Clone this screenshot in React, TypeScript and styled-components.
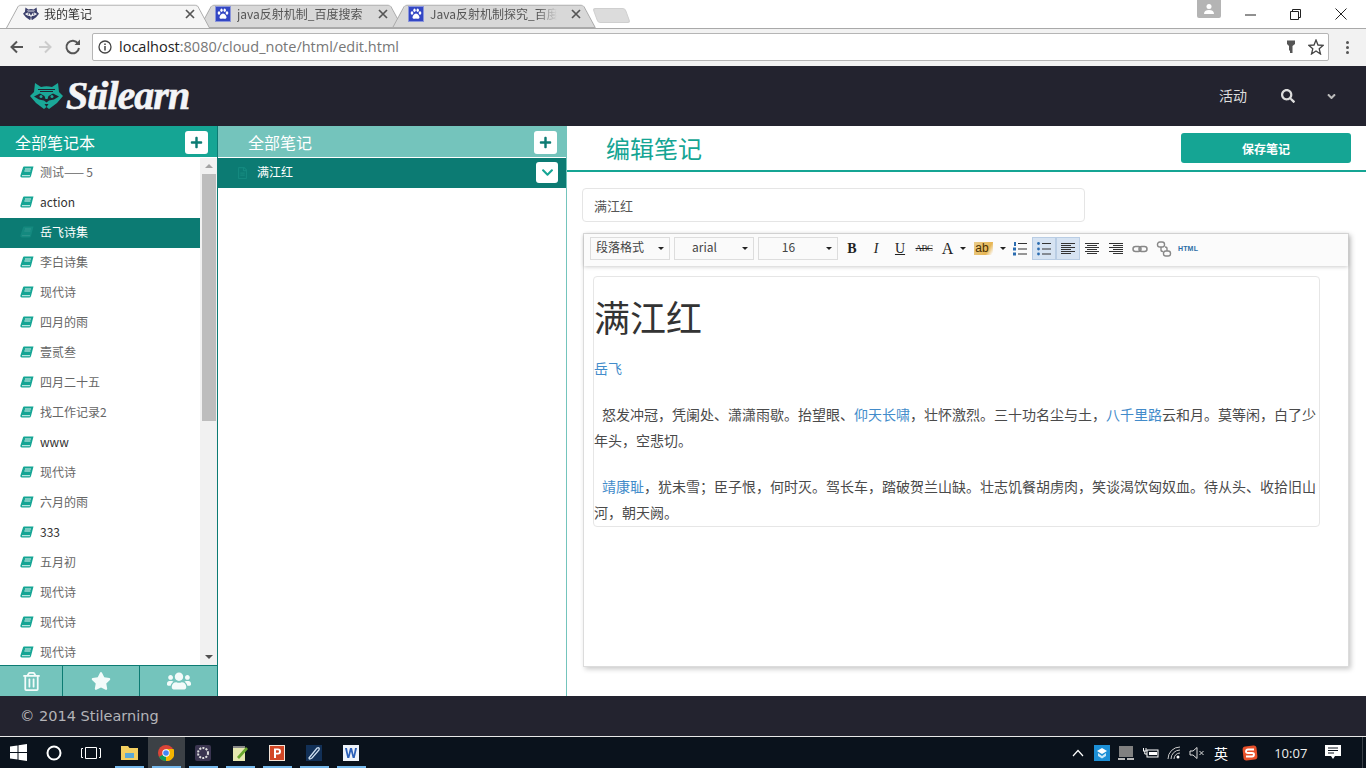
import React from "react";
import styled, { createGlobalStyle } from "styled-components";
import {
  FaPlus,
  FaChevronDown,
  FaSearch,
  FaRegTrashAlt,
  FaStar,
  FaUsers,
  FaRegFileAlt,
  FaAngleDown,
} from "react-icons/fa";

const CJK = `"Noto Sans CJK SC", "Open Sans", sans-serif`;
const TEAL = "#15a594";
const DARK_TEAL = "#0c7b73";
const PALE_TEAL = "#74c4bc";
const NAVY = "#23232f";

const Global = createGlobalStyle`
  html, body { margin: 0; padding: 0; height: 100%; overflow: hidden; background: #fff; }
  * { box-sizing: border-box; }
  #root { height: 100%; }
`;

const Page = styled.div`
  width: 1366px;
  height: 768px;
  display: flex;
  flex-direction: column;
  overflow: hidden;
  font-family: ${CJK};
  background: #fff;
`;

/* ---------- browser chrome ---------- */
const TabStrip = styled.div`
  height: 28px;
  display: flex;
  align-items: flex-end;
  padding-left: 8px;
  background: #fff;
  position: relative;
`;
const Tab = styled.div<{ $active?: boolean }>`
  position: relative;
  width: 193px;
  height: 28px;
  display: flex;
  align-items: center;
  padding: 0 6px 0 ${(p) => (p.$active ? 15 : 14)}px;
  gap: ${(p) => (p.$active ? 5 : 6)}px;
  font-size: 12px;
  color: ${(p) => (p.$active ? "#333" : "#555")};
  z-index: ${(p) => (p.$active ? 2 : 1)};
  &::before {
    content: "";
    position: absolute;
    inset: 1px -9px 0 -2px;
    z-index: -1;
    background: ${(p) => (p.$active ? "#f5f5f5" : "#d8d8d8")};
    border: 1px solid #a9a9a9;
    border-bottom: ${(p) => (p.$active ? "none" : "1px solid #a9a9a9")};
    border-radius: 3px 3px 0 0;
    transform: perspective(40px) rotateX(12deg);
    transform-origin: bottom;
  }
`;
const TabTitle = styled.span<{ $fade?: boolean }>`
  flex: 1;
  min-width: 0;
  margin-right: 8px;
  white-space: nowrap;
  overflow: hidden;
  margin-top: -2px;
  ${(p) =>
    p.$fade
      ? "mask-image: linear-gradient(to right, #000 85%, transparent 100%);"
      : ""}
`;
const TabClose = styled.svg`
  width: 10px;
  height: 10px;
  flex: none;
`;
const NewTab = styled.div`
  width: 33px;
  height: 15px;
  margin: 0 0 5px 8px;
  background: #dcdcdc;
  border: 1px solid #cfcfcf;
  border-radius: 3px;
  transform: skewX(20deg);
`;
const WindowControls = styled.div`
  margin-left: auto;
  height: 28px;
  display: flex;
  align-items: flex-start;
  padding-right: 2px;
`;
const UserBadge = styled.div`
  width: 24px;
  height: 18px;
  background: #b4b4b4;
  border-radius: 0 0 2px 2px;
  margin-right: 7px;
  display: flex;
  align-items: center;
  justify-content: center;
`;
const WinButton = styled.div`
  width: 45.5px;
  height: 28px;
  display: flex;
  align-items: center;
  justify-content: center;
`;
const BrowserBar = styled.div`
  height: 38px;
  background: #f2f2f2;
  display: flex;
  align-items: center;
  border-top: 1px solid #a9a9a9;
  padding: 0 0 1px 8px;
  position: relative;
  z-index: 1;
`;
const NavIcon = styled.svg`
  width: 18px;
  height: 18px;
  flex: none;
  & + & {
    margin-left: 10px;
  }
`;
const UrlBox = styled.div`
  margin-left: 10px;
  width: 1237px;
  height: 28px;
  background: #fff;
  border: 1px solid #b5b5b5;
  border-radius: 2px;
  display: flex;
  align-items: center;
  padding-left: 5px;
  padding-right: 4px;
  font-family: "Open Sans", sans-serif;
  font-size: 14.5px;
`;
const UrlText = styled.span`
  color: #777;
  margin: -1px 0 0 7px;
  flex: 1;
  white-space: nowrap;
`;
const UrlHost = styled.span`
  color: #222;
`;
const UrlIcon = styled.svg`
  width: 16px;
  height: 16px;
  flex: none;
  margin-left: 9px;
`;
const MenuDots = styled.div`
  margin-left: 17px;
  display: flex;
  flex-direction: column;
  gap: 2px;
  i {
    width: 3px;
    height: 3px;
    border-radius: 50%;
    background: #555;
    display: block;
  }
`;

/* ---------- app header ---------- */
const Header = styled.header`
  height: 60px;
  background: ${NAVY};
  display: flex;
  align-items: center;
  padding: 0 28px 0 30px;
  flex: none;
`;
const Logo = styled.div`
  display: flex;
  align-items: center;
  gap: 3px;
`;
const LogoText = styled.span`
  font-family: "Liberation Serif", serif;
  font-style: italic;
  font-weight: 700;
  font-size: 40px;
  line-height: 1;
  letter-spacing: -1px;
  color: #f4f5f7;
  -webkit-text-stroke: 0.6px #f4f5f7;
`;
const HeaderNav = styled.nav`
  margin-left: auto;
  display: flex;
  align-items: center;
  color: #ddd;
  font-size: 14px;
`;
const NavLabel = styled.span`
  margin: -2px 34px 0 0;
`;
const NavSearch = styled(FaSearch)`
  width: 14px;
  height: 14px;
  margin-right: 30px;
`;
const NavCaret = styled(FaAngleDown)`
  width: 13px;
  height: 13px;
  color: #bbb;
`;

/* ---------- main layout ---------- */
const Main = styled.main`
  flex: 1;
  display: flex;
  min-height: 0;
`;
const NotebookColumn = styled.section`
  width: 218px;
  flex: none;
  display: flex;
  flex-direction: column;
  border-right: 1px solid ${DARK_TEAL};
`;
const NotesColumn = styled.section`
  width: 349px;
  flex: none;
  display: flex;
  flex-direction: column;
  border-right: 1px solid ${PALE_TEAL};
`;
const ColumnHead = styled.div<{ $pale?: boolean }>`
  height: 31px;
  flex: none;
  background: ${(p) => (p.$pale ? PALE_TEAL : TEAL)};
  color: #fff;
  font-size: 16px;
  display: flex;
  align-items: center;
  justify-content: space-between;
  padding: 1px 9px 0 ${(p) => (p.$pale ? 30 : 15)}px;
`;
const SquareButton = styled.div`
  width: 23px;
  height: 23px;
  background: #fff;
  border-radius: 3px;
  color: ${DARK_TEAL};
  display: flex;
  align-items: center;
  justify-content: center;
  svg {
    width: 13px;
    height: 13px;
  }
`;
const ListArea = styled.div`
  flex: 1;
  min-height: 0;
  margin-top: 1px;
  display: flex;
  overflow: hidden;
`;
const List = styled.ul`
  flex: 1;
  margin: 0;
  padding: 0;
  list-style: none;
  overflow: hidden;
`;
const Row = styled.li<{ $active?: boolean; $latin?: boolean }>`
  height: 30px;
  display: flex;
  align-items: center;
  padding: 0 0 2px 20px;
  gap: 6px;
  font-size: 12px;
  color: ${(p) => (p.$active ? "#fff" : p.$latin ? "#333" : "#666")};
  background: ${(p) => (p.$active ? DARK_TEAL : "transparent")};
`;
const RowLabel = styled.span`
  margin-bottom: 2px;
`;
const Dash = styled.span`
  letter-spacing: 2px;
`;
const BookIcon = styled.svg<{ $active?: boolean }>`
  width: 14px;
  height: 12px;
  flex: none;
  color: ${(p) => (p.$active ? "#14897f" : TEAL)};
`;
const ScrollTrack = styled.div`
  width: 17px;
  flex: none;
  background: #f1f1f1;
  display: flex;
  flex-direction: column;
  align-items: center;
`;
const ScrollArrow = styled.div<{ $down?: boolean }>`
  flex: none;
  height: 16px;
  width: 17px;
  display: flex;
  align-items: center;
  justify-content: center;
  &::after {
    content: "";
    border-left: 4px solid transparent;
    border-right: 4px solid transparent;
    ${(p) =>
      p.$down
        ? "border-top: 4px solid #505050;"
        : "border-bottom: 4px solid #a3a3a3;"}
  }
`;
const ScrollThumb = styled.div`
  width: 14px;
  height: 247px;
  background: #bdbdbd;
  margin-bottom: auto;
`;
const BottomTabs = styled.div`
  height: 31px;
  flex: none;
  display: grid;
  grid-template-columns: 62px 77px 1fr;
  background: ${PALE_TEAL};
  border-top: 1px solid ${DARK_TEAL};
  color: #f3fbfa;
`;
const BottomTab = styled.div<{ $size: number }>`
  display: flex;
  align-items: center;
  justify-content: center;
  & + & {
    border-left: 1px solid ${DARK_TEAL};
  }
  svg {
    width: ${(p) => p.$size}px;
    height: ${(p) => p.$size}px;
  }
`;
const NoteRow = styled.div`
  height: 30px;
  margin-top: 1px;
  flex: none;
  display: flex;
  align-items: center;
  background: ${DARK_TEAL};
  color: #fff;
  font-size: 12px;
  padding: 0 8px 0 19px;
  gap: 9px;
`;
const NoteIcon = styled(FaRegFileAlt)`
  width: 11px;
  height: 12px;
  color: #14897f;
  margin-bottom: 1px;
`;
const NoteTitle = styled.span`
  flex: 1;
  margin-bottom: 3px;
`;
const NoteToggle = styled(SquareButton)`
  width: 22px;
  height: 21px;
  margin-bottom: 1px;
  color: ${TEAL};
`;

/* ---------- editor column ---------- */
const EditorColumn = styled.section`
  flex: 1;
  min-width: 0;
  display: flex;
  flex-direction: column;
  padding-bottom: 29px;
`;
const EditorHead = styled.div`
  height: 46px;
  flex: none;
  display: flex;
  align-items: center;
  justify-content: space-between;
  padding: 0 15px 0 39px;
  border-bottom: 2px solid ${TEAL};
  margin-bottom: 16px;
`;
const EditorTitle = styled.h2`
  margin: 0;
  font-size: 24px;
  font-weight: 400;
  color: ${TEAL};
  line-height: 1;
`;
const SaveButton = styled.button`
  width: 170px;
  height: 30px;
  border: 0;
  border-radius: 3px;
  background: ${TEAL};
  color: #fff;
  font: 700 12px ${CJK};
`;
const TitleInput = styled.div`
  width: 503px;
  height: 34px;
  margin-left: 15px;
  flex: none;
  border: 1px solid #e5e5e5;
  border-radius: 4px;
  display: flex;
  align-items: center;
  padding-left: 11px;
  font-size: 13px;
  color: #555;
`;
const EditorBox = styled.div`
  flex: 1;
  min-height: 0;
  margin: 11px 17px 0 16px;
  border: 1px solid #dcdcdc;
  box-shadow: 2px 2px 5px rgba(0, 0, 0, 0.22);
  background: #fff;
  display: flex;
  flex-direction: column;
`;
const Toolbar = styled.div`
  height: 32px;
  flex: none;
  background: #fbfbfb;
  box-shadow: 0 1px 4px rgba(0, 0, 0, 0.2);
  display: flex;
  align-items: center;
  padding: 0 0 3px 6px;
  font-family: "Liberation Serif", serif;
`;
const SelectBox = styled.div<{ $center?: boolean; $tight?: boolean }>`
  width: 80px;
  height: 23px;
  margin-right: ${(p) => (p.$tight ? 2 : 4)}px;
  border: 1px solid #ddd;
  background: #fafafa;
  font: 12px ${CJK};
  color: #444;
  display: flex;
  align-items: center;
  justify-content: ${(p) => (p.$center ? "center" : "flex-start")};
  padding: 0 ${(p) => (p.$center ? "24px" : "0")} 4px 5px;
  position: relative;
  &::after {
    content: "";
    position: absolute;
    right: 5px;
    top: 9px;
    border-left: 3px solid transparent;
    border-right: 3px solid transparent;
    border-top: 3px solid #222;
  }
`;
const ToolButton = styled.div<{ $wide?: boolean; $on?: boolean }>`
  width: ${(p) => (p.$wide ? 36 : 24)}px;
  height: 23px;
  flex: none;
  display: flex;
  align-items: center;
  justify-content: center;
  gap: 7px;
  color: #222;
  ${(p) =>
    p.$on
      ? `background: #d6e3f2; box-shadow: inset 0 0 0 1px #b9cde4, inset 0 0 0 2px #d6e3f2; background-clip: content-box; padding: 0 1px;`
      : ""}
`;
const Glyph = styled.span<{
  $size?: number;
  $weight?: number;
  $italic?: boolean;
  $under?: boolean;
  $strike?: boolean;
}>`
  font-size: ${(p) => p.$size ?? 15}px;
  font-weight: ${(p) => p.$weight ?? 400};
  font-style: ${(p) => (p.$italic ? "italic" : "normal")};
  text-decoration: ${(p) =>
    p.$under ? "underline" : p.$strike ? "line-through" : "none"};
  letter-spacing: ${(p) => (p.$strike ? "-0.5px" : "0")};
  line-height: 1;
`;
const Highlight = styled.span`
  font: 12px "Liberation Sans", sans-serif;
  line-height: 1;
  background: linear-gradient(120deg, #e9cd8c, #e7b654 70%, transparent 95%);
  padding: 0 4px 1px 1px;
  color: #4a3000;
`;
const HtmlLabel = styled.span`
  font: 700 7px "Liberation Sans", sans-serif;
  color: #2c6ea6;
  letter-spacing: 0.2px;
`;
const Caret = styled.i`
  width: 0;
  height: 0;
  border-left: 3px solid transparent;
  border-right: 3px solid transparent;
  border-top: 3px solid #222;
`;
const ToolSvg = styled.svg`
  width: 16px;
  height: 16px;
  display: block;
`;
const EditorBody = styled.div`
  flex: 1;
  padding: 10px 28px 0 9px;
`;
const ContentCard = styled.article`
  border: 1px solid #e6e6e6;
  border-radius: 4px;
  height: 251px;
  font-size: 14px;
  line-height: 26px;
  color: #4a4a4a;
  overflow: hidden;
`;
const NoteHeading = styled.h1`
  margin: 17px 0 0;
  font-size: 36px;
  font-weight: 400;
  line-height: 44px;
  color: #333;
`;
const Byline = styled.p`
  margin: 17px 0 20px;
  color: #428bca;
`;
const Verse = styled.p`
  margin: 0 0 20px;
`;
const Accent = styled.span`
  color: #428bca;
`;
const Indent = styled.span`
  display: inline-block;
  width: 8px;
`;

/* ---------- footer ---------- */
const Footer = styled.footer`
  height: 40px;
  flex: none;
  background: ${NAVY};
  color: #b4b4b8;
  font: 14.5px "DejaVu Sans", sans-serif;
  display: flex;
  align-items: center;
  padding-left: 20px;
`;
const Taskbar = styled.div`
  height: 32px;
  flex: none;
  border-top: 1px solid #e8e8e8;
  background: #0a121c;
  display: flex;
  align-items: center;
  color: #fff;
  position: relative;
`;
const TaskSlot = styled.div<{ $w?: number; $active?: boolean; $open?: boolean }>`
  width: ${(p) => p.$w ?? 37}px;
  height: 31px;
  flex: none;
  display: flex;
  align-items: center;
  justify-content: center;
  position: relative;
  background: ${(p) => (p.$active ? "#3c4146" : "transparent")};
  ${(p) =>
    p.$open
      ? `&::after { content: ""; position: absolute; left: 4px; right: 4px; bottom: 0; height: 2px; background: #76b9ed; }`
      : ""}
`;
const Tray = styled.div`
  margin-left: auto;
  display: flex;
  align-items: center;
  height: 31px;
`;
const TrayItem = styled.div<{ $w?: number }>`
  width: ${(p) => p.$w ?? 24}px;
  flex: none;
  display: flex;
  align-items: center;
  justify-content: center;
  font-size: 14px;
`;
const Clock = styled.div`
  width: 47.5px;
  text-align: center;
  font: 13px "Open Sans", sans-serif;
  color: #eee;
`;
const TrayEdge = styled.div`
  width: 14.5px;
  height: 31px;
  margin-left: 0;
  padding-left: 10px;
  &::after {
    content: "";
    display: block;
    width: 1px;
    height: 31px;
    background: #3a4048;
  }
`;

/* ---------- drawings ---------- */
const Raccoon = ({
  size = 33,
  fill = "#1aa898",
  mask = NAVY,
}: {
  size?: number;
  fill?: string;
  mask?: string;
}) => (
  <svg width={size} height={(size * 28) / 33} viewBox="0 0 33 28">
    <path
      d="M5 1 L11 5 Q16.500 3.500 22 5 L28 1 L29 10 L33 14 L27 21 L19 27 L16.500 25 L14 27 L6 21 L0 14 L4 10 Z"
      fill={fill}
    />
    <path d="M8 7.500 H25 M10 9.500 H23" stroke={mask} strokeWidth="1" />
    <path
      d="M4 14.500 L10 11.500 L14.500 14 L15.500 17 H17.500 L18.500 14 L23 11.500 L29 14.500 L24 17.500 L19 18.500 L16.500 20.500 L14 18.500 L9 17.500 Z"
      fill={mask}
    />
    <circle cx="11" cy="14.500" r="1.500" fill={fill} />
    <circle cx="22" cy="14.500" r="1.500" fill={fill} />
    <path d="M14.500 22 H18.500 L16.500 25 Z" fill={mask} />
  </svg>
);

const Paw = () => (
  <svg width="16" height="16" viewBox="0 0 16 16">
    <rect x="0.500" y="0.500" width="15" height="15" fill="#3347c4" stroke="#8b96dc" />
    <g fill="#fff">
      <ellipse cx="4" cy="7" rx="1.300" ry="1.700" />
      <ellipse cx="6.500" cy="4.200" rx="1.200" ry="1.700" />
      <ellipse cx="9.700" cy="4.200" rx="1.200" ry="1.700" />
      <ellipse cx="12" cy="7" rx="1.300" ry="1.700" />
      <path d="M8 7.500 C6 7.500 4.500 10 4.500 11.500 C4.500 13 6.500 13 8 12.500 C9.500 13 11.500 13 11.500 11.500 C11.500 10 10 7.500 8 7.500Z" />
    </g>
  </svg>
);

const CloseX = () => (
  <TabClose viewBox="0 0 10 10">
    <path d="M1 1 L9 9 M9 1 L1 9" stroke="#555" strokeWidth="1.700" />
  </TabClose>
);

const Book = ({ active }: { active?: boolean }) => (
  <BookIcon $active={active} viewBox="0 0 14 12">
    <path
      d="M4 0.500 H13.500 L11 10 Q10.700 11.500 9 11.500 H1.800 Q0 11.500 0.400 9.500 L3 1.500 Q3.300 0.500 4 0.500 Z"
      fill="currentColor"
    />
    <path d="M5 3 H11 M4.400 5 H10.400" stroke="#fff" strokeOpacity={active ? 0.12 : 0.85} strokeWidth="1" />
    <path d="M2 9.700 H10" stroke="#fff" strokeOpacity={active ? 0.12 : 0.85} strokeWidth="1" />
  </BookIcon>
);

const Lines = ({ rows }: { rows: [number, number][] }) => (
  <ToolSvg viewBox="0 0 16 16">
    {rows.map(([x, w], i) => (
      <rect key={i} x={x} y={2 + i * 2} width={w} height={1} fill="#333" />
    ))}
  </ToolSvg>
);

const OrderedList = () => (
  <ToolSvg viewBox="0 0 16 16">
    <g fill="#2b6cb0">
      <rect x="2" y="1" width="2" height="4" />
      <rect x="1" y="6.500" width="3" height="3" />
      <rect x="1" y="11.500" width="3" height="3" />
    </g>
    <g fill="#333">
      <rect x="6" y="2" width="9" height="1" />
      <rect x="6" y="7.500" width="9" height="1" />
      <rect x="6" y="12.500" width="9" height="1" />
    </g>
  </ToolSvg>
);

const BulletList = () => (
  <ToolSvg viewBox="0 0 16 16">
    <g fill="#2b6cb0">
      <circle cx="2.500" cy="2.500" r="1.400" />
      <circle cx="2.500" cy="8" r="1.400" />
      <circle cx="2.500" cy="13" r="1.400" />
    </g>
    <g fill="#333">
      <rect x="6" y="2" width="9" height="1" />
      <rect x="6" y="7.500" width="9" height="1" />
      <rect x="6" y="12.500" width="9" height="1" />
    </g>
  </ToolSvg>
);

const ChainLink = () => (
  <ToolSvg viewBox="0 0 16 16">
    <g fill="none" stroke="#888" strokeWidth="1.500">
      <rect x="1" y="5.500" width="8" height="5" rx="2.500" />
      <rect x="7" y="5.500" width="8" height="5" rx="2.500" />
    </g>
  </ToolSvg>
);

const ChainBroken = () => (
  <ToolSvg viewBox="0 0 16 16">
    <g fill="none" stroke="#888" strokeWidth="1.400">
      <rect x="1.500" y="1" width="7" height="5" rx="2.300" />
      <rect x="7.500" y="10" width="7" height="5" rx="2.300" />
      <path d="M5 6 V9 Q5 10.500 7 10.500 M11 10 V7.500 Q11 6 9 6" />
    </g>
  </ToolSvg>
);

const notebooks = [
  "测试——5", "action", "岳飞诗集", "李白诗集", "现代诗", "四月的雨", "壹贰叁", "四月二十五",
  "找工作记录2", "www", "现代诗", "六月的雨", "333", "五月初", "现代诗", "现代诗", "现代诗",
];

export default function App() {
  return (
    <Page>
      <Global />
      <TabStrip>
        <Tab $active>
          <Raccoon size={16} fill="#3b3f6b" mask="#f5f5f5" />
          <TabTitle>我的笔记</TabTitle>
          <CloseX />
        </Tab>
        <Tab>
          <Paw />
          <TabTitle>java反射机制_百度搜索</TabTitle>
          <CloseX />
        </Tab>
        <Tab>
          <Paw />
          <TabTitle $fade>Java反射机制探究_百度文库</TabTitle>
          <CloseX />
        </Tab>
        <NewTab />
        <WindowControls>
          <UserBadge>
            <svg width="12" height="12" viewBox="0 0 12 12">
              <circle cx="6" cy="3.500" r="2.500" fill="#fff" />
              <path d="M1 11 Q1 7 6 7 Q11 7 11 11 Z" fill="#fff" />
            </svg>
          </UserBadge>
          <WinButton>
            <svg width="11" height="11" viewBox="0 0 11 11">
              <path d="M0 6 H11" stroke="#222" />
            </svg>
          </WinButton>
          <WinButton>
            <svg width="11" height="11" viewBox="0 0 11 11">
              <path d="M0.500 2.500 H8.500 V10.500 H0.500 Z M2.500 2.500 V0.500 H10.500 V8.500 H8.500" fill="none" stroke="#222" />
            </svg>
          </WinButton>
          <WinButton>
            <svg width="12" height="12" viewBox="0 0 12 12">
              <path d="M0.500 0.500 L11.500 11.500 M11.500 0.500 L0.500 11.500" stroke="#222" />
            </svg>
          </WinButton>
        </WindowControls>
      </TabStrip>
      <BrowserBar>
        <NavIcon viewBox="0 0 18 18">
          <path d="M15 9 H4 M9 3.500 L3.500 9 L9 14.500" fill="none" stroke="#555" strokeWidth="2" />
        </NavIcon>
        <NavIcon viewBox="0 0 18 18">
          <path d="M3 9 H14 M9 3.500 L14.500 9 L9 14.500" fill="none" stroke="#ccc" strokeWidth="2" />
        </NavIcon>
        <NavIcon viewBox="0 0 18 18">
          <path d="M14 5.500 A6.300 6.300 0 1 0 15 10" fill="none" stroke="#555" strokeWidth="2" />
          <path d="M10.500 7 H16 V1.500 Z" fill="#555" />
        </NavIcon>
        <UrlBox>
          <svg width="14" height="14" viewBox="0 0 14 14">
            <circle cx="7" cy="7" r="6" fill="none" stroke="#444" strokeWidth="1.300" />
            <path d="M7 6 V10.500 M7 3.500 V5" stroke="#444" strokeWidth="1.500" />
          </svg>
          <UrlText>
            <UrlHost>localhost</UrlHost>:8080/cloud_note/html/edit.html
          </UrlText>
          <UrlIcon viewBox="0 0 16 16">
            <path d="M4 1.500 H12 V5 L9.500 7 V14 H7 V11.500 H6 V7 L4 5 Z" fill="#555" />
          </UrlIcon>
          <UrlIcon viewBox="0 0 16 16">
            <path d="M8 1 L10 6 L15.300 6.300 L11.200 9.700 L12.500 15 L8 12 L3.500 15 L4.800 9.700 L0.700 6.300 L6 6 Z" fill="none" stroke="#444" strokeWidth="1.300" />
          </UrlIcon>
        </UrlBox>
        <MenuDots>
          <i />
          <i />
          <i />
        </MenuDots>
      </BrowserBar>

      <Header>
        <Logo>
          <Raccoon />
          <LogoText>Stilearn</LogoText>
        </Logo>
        <HeaderNav>
          <NavLabel>活动</NavLabel>
          <NavSearch />
          <NavCaret />
        </HeaderNav>
      </Header>

      <Main>
        <NotebookColumn>
          <ColumnHead>
            全部笔记本
            <SquareButton>
              <FaPlus />
            </SquareButton>
          </ColumnHead>
          <ListArea>
            <List>
              {notebooks.map((name, i) => (
                <Row key={i} $active={i === 2} $latin={/^[\x00-\x7f]+$/.test(name)}>
                  <Book active={i === 2} />
                  <RowLabel>
                    {name.includes("——") ? (
                      <>
                        {name.split("——")[0]}
                        <Dash>——</Dash>
                        {name.split("——")[1]}
                      </>
                    ) : (
                      name
                    )}
                  </RowLabel>
                </Row>
              ))}
            </List>
            <ScrollTrack>
              <ScrollArrow />
              <ScrollThumb />
              <ScrollArrow $down />
            </ScrollTrack>
          </ListArea>
          <BottomTabs>
            <BottomTab $size={19}>
              <FaRegTrashAlt />
            </BottomTab>
            <BottomTab $size={20}>
              <FaStar />
            </BottomTab>
            <BottomTab $size={24}>
              <FaUsers />
            </BottomTab>
          </BottomTabs>
        </NotebookColumn>

        <NotesColumn>
          <ColumnHead $pale>
            全部笔记
            <SquareButton>
              <FaPlus />
            </SquareButton>
          </ColumnHead>
          <NoteRow>
            <NoteIcon />
            <NoteTitle>满江红</NoteTitle>
            <NoteToggle>
              <FaChevronDown />
            </NoteToggle>
          </NoteRow>
        </NotesColumn>

        <EditorColumn>
          <EditorHead>
            <EditorTitle>编辑笔记</EditorTitle>
            <SaveButton>保存笔记</SaveButton>
          </EditorHead>
          <TitleInput>满江红</TitleInput>
          <EditorBox>
            <Toolbar>
              <SelectBox>段落格式</SelectBox>
              <SelectBox $center>arial</SelectBox>
              <SelectBox $center $tight>16</SelectBox>
              <ToolButton><Glyph $weight={700} $size={14}>B</Glyph></ToolButton>
              <ToolButton><Glyph $italic $size={14}>I</Glyph></ToolButton>
              <ToolButton><Glyph $under $size={14}>U</Glyph></ToolButton>
              <ToolButton><Glyph $strike $size={9}>ABC</Glyph></ToolButton>
              <ToolButton $wide><Glyph $size={16}>A</Glyph><Caret /></ToolButton>
              <ToolButton $wide><Highlight>ab</Highlight><Caret /></ToolButton>
              <ToolButton><OrderedList /></ToolButton>
              <ToolButton $on><BulletList /></ToolButton>
              <ToolButton $on><Lines rows={[[1, 14], [1, 10], [1, 14], [1, 10], [1, 14], [1, 10]]} /></ToolButton>
              <ToolButton><Lines rows={[[1, 14], [3, 10], [1, 14], [3, 10], [1, 14], [3, 10]]} /></ToolButton>
              <ToolButton><Lines rows={[[1, 14], [5, 10], [1, 14], [5, 10], [1, 14], [5, 10]]} /></ToolButton>
              <ToolButton><ChainLink /></ToolButton>
              <ToolButton><ChainBroken /></ToolButton>
              <ToolButton><HtmlLabel>HTML</HtmlLabel></ToolButton>
            </Toolbar>
            <EditorBody>
              <ContentCard>
                <NoteHeading>满江红</NoteHeading>
                <Byline>岳飞</Byline>
                <Verse>
                  <Indent />
                  怒发冲冠，凭阑处、潇潇雨歇。抬望眼、<Accent>仰天长啸</Accent>，壮怀激烈。三十功名尘与土，<Accent>八千里路</Accent>云和月。莫等闲，白了少年头，空悲切。
                </Verse>
                <Verse>
                  <Indent />
                  <Accent>靖康耻</Accent>，犹未雪；臣子恨，何时灭。驾长车，踏破贺兰山缺。壮志饥餐胡虏肉，笑谈渴饮匈奴血。待从头、收拾旧山河，朝天阙。
                </Verse>
              </ContentCard>
            </EditorBody>
          </EditorBox>
        </EditorColumn>
      </Main>

      <Footer>© 2014 Stilearning</Footer>

      <Taskbar>
        <TaskSlot $w={36}>
          <svg width="17" height="17" viewBox="0 0 17 17" fill="#fff">
            <path d="M0 2.500 L7.500 1.400 V8 H0 Z M8.500 1.300 L17 0 V8 H8.500 Z M0 9 H7.500 V15.600 L0 14.500 Z M8.500 9 H17 V17 L8.500 15.700 Z" />
          </svg>
        </TaskSlot>
        <TaskSlot $w={36}>
          <svg width="16" height="16" viewBox="0 0 16 16">
            <circle cx="8" cy="8" r="6.500" fill="none" stroke="#fff" strokeWidth="2" />
          </svg>
        </TaskSlot>
        <TaskSlot $w={38.5}>
          <svg width="20" height="14" viewBox="0 0 20 14" fill="none" stroke="#fff">
            <path d="M4.500 1.500 H15.500 V12.500 H4.500 Z M2 2.500 H0.500 V11.500 H2 M18 2.500 H19.500 V11.500 H18" />
          </svg>
        </TaskSlot>
        <TaskSlot $open>
          <svg width="17" height="15" viewBox="0 0 17 15">
            <path d="M0 1 H7 L8.500 3 H17 V15 H0 Z" fill="#f3cf60" />
            <rect x="4" y="8" width="9" height="5" fill="#5ba9d6" />
          </svg>
        </TaskSlot>
        <TaskSlot $open $active>
          <svg width="16" height="16" viewBox="0 0 16 16">
            <circle cx="8" cy="8" r="8" fill="#db4437" />
            <path d="M8 8 L1 12 A8 8 0 0 0 8 16 Z" fill="#0f9d58" />
            <path d="M8 4 H15.500 A8 8 0 0 1 8 16 L8 8 Z" fill="#f4b400" />
            <circle cx="8" cy="8" r="3.700" fill="#fff" />
            <circle cx="8" cy="8" r="2.800" fill="#4285f4" />
          </svg>
        </TaskSlot>
        <TaskSlot $open>
          <svg width="16" height="16" viewBox="0 0 16 16">
            <rect width="16" height="16" rx="2" fill="#3a3550" />
            <circle cx="8" cy="8" r="5" fill="none" stroke="#ddd" strokeWidth="2" strokeDasharray="2 1.200" />
          </svg>
        </TaskSlot>
        <TaskSlot $open>
          <svg width="16" height="16" viewBox="0 0 16 16">
            <rect x="1" y="1" width="12" height="15" fill="#e6e8b0" />
            <path d="M1 1 H13 V3 H1 Z" fill="#888" />
            <path d="M5 12 L14 2 L16 4 L7 14 Z" fill="#6aa72f" />
          </svg>
        </TaskSlot>
        <TaskSlot $open>
          <svg width="16" height="16" viewBox="0 0 16 16">
            <rect width="16" height="16" fill="#f4e4d8" />
            <rect x="1" y="1" width="14" height="14" fill="#d24726" />
            <path d="M5 3.500 H9 Q12 3.500 12 6.500 Q12 9.500 9 9.500 H7 V13 H5 Z M7 5.200 V7.800 H9 Q10 7.800 10 6.500 Q10 5.200 9 5.200 Z" fill="#fff" />
          </svg>
        </TaskSlot>
        <TaskSlot $open>
          <svg width="16" height="16" viewBox="0 0 16 16">
            <rect width="16" height="16" fill="#123057" />
            <path d="M3 13 L11 3 Q14 2 13 5 L6 13 Q3 15 3 13 Z" fill="none" stroke="#cfe0f2" strokeWidth="1.300" />
          </svg>
        </TaskSlot>
        <TaskSlot $open>
          <svg width="16" height="16" viewBox="0 0 16 16">
            <rect width="16" height="16" fill="#eef3fa" />
            <path d="M2 3 H4 L5.300 10 L7 3 H9 L10.700 10 L12 3 H14 L11.700 13 H9.700 L8 6.500 L6.300 13 H4.300 Z" fill="#2b5fb8" />
          </svg>
        </TaskSlot>
        <Tray>
          <TrayItem>
            <svg width="12" height="8" viewBox="0 0 12 8">
              <path d="M1 7 L6 1.500 L11 7" fill="none" stroke="#fff" strokeWidth="1.200" />
            </svg>
          </TrayItem>
          <TrayItem>
            <svg width="16" height="16" viewBox="0 0 16 16">
              <rect width="16" height="16" fill="#1c8fd6" />
              <path d="M8 3 L13 6 L8 9 L3 6 Z" fill="#fff" />
              <path d="M4 8 L8 11 L12 8 V11 L8 13.500 L4 11 Z" fill="#cbe7f7" />
            </svg>
          </TrayItem>
          <TrayItem>
            <svg width="16" height="16" viewBox="0 0 16 16">
              <rect x="1" y="1" width="14" height="11" fill="#808080" />
              <rect x="0" y="13" width="7" height="2" fill="#bbb" />
              <rect x="9" y="13" width="7" height="2" fill="#bbb" />
            </svg>
          </TrayItem>
          <TrayItem $w={25}>
            <svg width="16" height="12" viewBox="0 0 16 12">
              <rect x="4" y="3" width="11" height="7" fill="none" stroke="#fff" />
              <rect x="6" y="5" width="8" height="3" fill="#fff" />
              <path d="M0.500 1 V4 M3 1 V4 M0 4 H3.500 M1.800 4 V7 H4" stroke="#fff" fill="none" />
            </svg>
          </TrayItem>
          <TrayItem $w={22}>
            <svg width="14" height="14" viewBox="0 0 14 14" fill="none" stroke="#ccc">
              <path d="M1 13 A12 12 0 0 1 13 1 M4 13 A9 9 0 0 1 13 4 M7 13 A6 6 0 0 1 13 7" />
              <circle cx="11" cy="11" r="1.500" fill="#fff" stroke="none" />
            </svg>
          </TrayItem>
          <TrayItem>
            <svg width="16" height="14" viewBox="0 0 16 14" fill="none" stroke="#ddd">
              <path d="M1 5 H4 L8 1.500 V12.500 L4 9 H1 Z M10.500 5 L14.500 9 M14.500 5 L10.500 9" />
            </svg>
          </TrayItem>
          <TrayItem>英</TrayItem>
          <TrayItem $w={34}>
            <svg width="16" height="16" viewBox="0 0 16 16">
              <rect x="1" y="1" width="14" height="14" rx="3" fill="#e8502a" transform="rotate(-6 8 8)" />
              <path d="M12 4.500 H6 Q4 4.500 4 6.500 Q4 8 6 8 H10 Q12 8 12 9.500 Q12 11.500 10 11.500 H4" fill="none" stroke="#fff" strokeWidth="1.800" />
            </svg>
          </TrayItem>
          <Clock>10:07</Clock>
          <TrayItem $w={37}>
            <svg width="16" height="15" viewBox="0 0 16 15" fill="#fff">
              <path d="M0 0 H16 V11 H10 L8 14 L6 11 H0 Z" />
              <path d="M3 3 H13 M3 5.500 H13 M3 8 H9" stroke="#0a121c" />
            </svg>
          </TrayItem>
          <TrayEdge />
        </Tray>
      </Taskbar>
    </Page>
  );
}
